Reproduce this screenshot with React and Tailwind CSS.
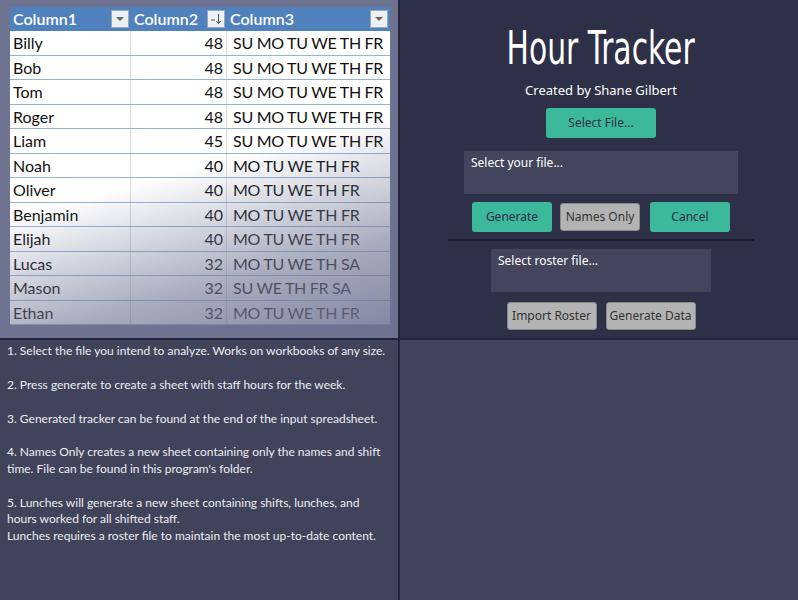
const rows = [
  ['Billy', 48, 'SU MO TU WE TH FR'],
  ['Bob', 48, 'SU MO TU WE TH FR'],
  ['Tom', 48, 'SU MO TU WE TH FR'],
  ['Roger', 48, 'SU MO TU WE TH FR'],
  ['Liam', 45, 'SU MO TU WE TH FR'],
  ['Noah', 40, 'MO TU WE TH FR'],
  ['Oliver', 40, 'MO TU WE TH FR'],
  ['Benjamin', 40, 'MO TU WE TH FR'],
  ['Elijah', 40, 'MO TU WE TH FR'],
  ['Lucas', 32, 'MO TU WE TH SA'],
  ['Mason', 32, 'SU WE TH FR SA'],
  ['Ethan', 32, 'MO TU WE TH FR'],
];

const FilterBtn = ({ sort }) => (
  <span className="flex h-[18px] w-[18px] items-center justify-center border border-[#9aa5b8] bg-[#eef0f3]">
    {sort ? (
      <svg width="12" height="12" viewBox="0 0 12 12">
        <path d="M1 7h4" stroke="#555" strokeWidth="1" />
        <path d="M8.5 1v9M6.5 8l2 2.5 2-2.5" stroke="#555" strokeWidth="1" fill="none" />
      </svg>
    ) : (
      <svg width="10" height="6" viewBox="0 0 10 6">
        <path d="M1 1h8L5 5z" fill="#666" />
      </svg>
    )}
  </span>
);

// screenshot of the spreadsheet, faded out towards the bottom right
const SheetPreview = () => (
  <div className="relative ml-[10px] mt-[7px] w-[380px] font-['Lato',sans-serif] text-[16px]">
    <div className="grid h-[24px] grid-cols-[121px_96px_163px] bg-[#4f81bd] font-semibold text-white">
      <div className="flex items-center justify-between pl-[3px] pr-[2px]">
        Column1 <FilterBtn />
      </div>
      <div className="flex items-center justify-between pl-[3px] pr-[2px]">
        Column2 <FilterBtn sort />
      </div>
      <div className="flex items-center justify-between pl-[3px] pr-[2px]">
        Column3 <FilterBtn />
      </div>
    </div>
    {rows.map(([name, hrs, days]) => (
      <div
        key={name}
        className="grid h-[24.5px] grid-cols-[121px_96px_163px] border-b border-[#95b3d7] bg-white leading-[23px] text-[#111]"
      >
        <div className="border-r border-[#d4d9e2] pl-[3px]">{name}</div>
        <div className="border-r border-[#d4d9e2] pr-[3px] text-right">{hrs}</div>
        <div className="pl-[6px] tracking-[-0.3px]">{days}</div>
      </div>
    ))}
    <div className="pointer-events-none absolute inset-0 bg-[linear-gradient(165deg,rgba(110,115,145,0)_50%,rgba(110,115,145,0.3)_65%,rgba(110,115,145,0.6)_80%,rgba(110,115,145,0.85)_100%)]" />
  </div>
);

const TealBtn = ({ children, w }) => (
  <button className={`${w} h-[30px] rounded-[3px] bg-[#3bb99a] text-[12px] text-[#2e3047]`}>{children}</button>
);

const GrayBtn = ({ children, w }) => (
  <button className={`${w} h-[28px] rounded-[3px] border border-[#8a8a8a] bg-[#b3b3b3] text-[12px] text-[#333]`}>
    {children}
  </button>
);

export default function App() {
  return (
    <div className="grid h-[600px] w-[798px] grid-cols-[398px_398px] grid-rows-[338px_260px] gap-[2px] bg-[#23243a] font-['Noto_Sans',sans-serif]">
      <div className="overflow-hidden bg-[#6e7391]">
        <SheetPreview />
      </div>

      <div className="flex flex-col items-center bg-[#2e3047] pl-[4px]">
        <h1 className="mt-[22px] h-[52px] origin-center scale-x-[0.72] font-['DejaVu_Sans_Condensed','DejaVu_Sans',sans-serif] text-[46px] font-extralight leading-[52px] text-white">
          Hour Tracker
        </h1>
        <p className="mt-[6px] text-[13px] leading-[20px] text-white">Created by Shane Gilbert</p>
        <div className="mt-[8px]">
          <TealBtn w="w-[110px]">Select File...</TealBtn>
        </div>
        <div className="mt-[13px] h-[43px] w-[274px] bg-[#43455c] px-[7px] pt-[3px] text-[12px] text-white">
          Select your file...
        </div>
        <div className="mt-[8px] flex items-center gap-[8px]">
          <TealBtn w="w-[80px]">Generate</TealBtn>
          <GrayBtn w="w-[80px]">Names Only</GrayBtn>
          <div className="ml-[2px]">
            <TealBtn w="w-[80px]">Cancel</TealBtn>
          </div>
        </div>
        <div className="mt-[7px] h-[2px] w-[306px] bg-[#1b1c2b]" />
        <div className="mt-[8px] h-[43px] w-[220px] bg-[#43455c] px-[7px] pt-[3px] text-[12px] text-white">
          Select roster file...
        </div>
        <div className="mt-[10px] flex gap-[9px]">
          <GrayBtn w="w-[90px]">Import Roster</GrayBtn>
          <GrayBtn w="w-[90px]">Generate Data</GrayBtn>
        </div>
      </div>

      <div className="bg-[#41435a] px-[7px] pt-[3px] font-['Lato',sans-serif] text-[12px] leading-[16.6px] text-[#ececf2]">
        <p>1. Select the file you intend to analyze. Works on workbooks of any size.</p>
        <p className="mt-[17.2px]">2. Press generate to create a sheet with staff hours for the week.</p>
        <p className="mt-[17.2px]">3. Generated tracker can be found at the end of the input spreadsheet.</p>
        <p className="mt-[17.2px]">
          4. Names Only creates a new sheet containing only the names and shift
          <br />
          time. File can be found in this program's folder.
        </p>
        <p className="mt-[17.2px]">
          5. Lunches will generate a new sheet containing shifts, lunches, and
          <br />
          hours worked for all shifted staff.
          <br />
          Lunches requires a roster file to maintain the most up-to-date content.
        </p>
      </div>

      <div className="bg-[#41435a]" />
    </div>
  );
}
